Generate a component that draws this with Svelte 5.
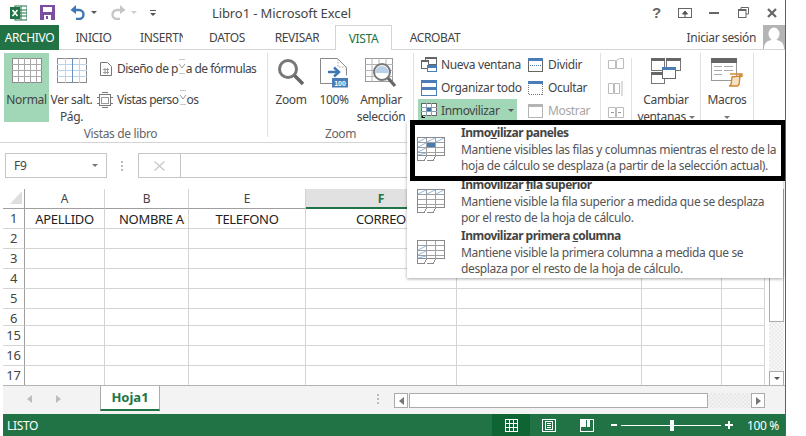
<script>
	const columns = [
		{ name: 'A', width: 80 },
		{ name: 'B', width: 84 },
		{ name: 'E', width: 117 },
		{ name: 'F', width: 151, selected: true },
		{ name: 'G', width: 185 },
		{ name: 'H', width: 80 },
		{ name: 'I', width: 43 }
	]
	// rows 7 to 14 are hidden, row 6 is shown shorter in the sheet
	const rows = [2, 3, 4, 5, 6, 15, 16, 17]
	const gridCols = `22px ${columns.map((c) => c.width + 'px').join(' ')}`
	const gridRows = ['20px', '20px', ...rows.map((r) => (r === 6 ? '17px' : '20px'))].join(' ')
</script>

{#snippet sheetIcon(kind)}
	<svg class="freeze" viewBox="0 0 28 24" width="28" height="24" shape-rendering="crispEdges">
		<rect x="0.5" y="0.5" width="27" height="18" fill="#fff" stroke="#8a8a8a" />
		<path d="M1 5.500h26M1 10.500h26M1 15.500h26M9.500 1v18M18.500 1v18" stroke="#a0a0a0" fill="none" />
		<g shape-rendering="auto" stroke="#8db8de" fill="none">
			{#if kind !== 'col'}
				<path d="M1 5l8-4M10 5l8-4M19 5l8-4" />
			{/if}
			{#if kind !== 'row'}
				<path d="M1 10l8-4M1 15l8-4M1 18l8-2" />
			{/if}
		</g>
		<path d="M0.500 19v4h7l2-4M9.500 23h7l2-4" stroke="#8a8a8a" fill="none" />
		{#if kind === 'panes'}
			<rect x="10" y="6" width="8" height="4" fill="#4a7ab0" />
		{/if}
	</svg>
{/snippet}

{#snippet glitch()}
	<span class="glitch">
		<svg viewBox="0 0 8 15" width="8" height="15">
			<path d="M1 .5h6M1 14.500h6" stroke="#c8c8c8" fill="none" />
			<path d="M1 5l3 4 3-4" stroke="#9a9a9a" fill="none" />
		</svg>
	</span>
{/snippet}

<div class="window">
	<header class="titlebar">
		<div class="quick">
			<svg viewBox="0 0 17 16" width="17" height="16">
				<rect x="5" y="1" width="12" height="14" fill="#fff" stroke="#217346" />
				<path d="M11 1v14M5 5h12M5 8h12M5 11h12" stroke="#217346" />
				<rect x="0" y="2" width="10" height="12" fill="#217346" />
				<path d="M2.500 5l5 6M7.500 5l-5 6" stroke="#fff" stroke-width="1.600" />
			</svg>
			<svg class="save" viewBox="0 0 15 15" width="15" height="15">
				<rect width="15" height="15" fill="#7d4e9e" />
				<rect x="3" y="2" width="9" height="5" fill="#fff" />
				<rect x="4" y="10" width="7" height="5" fill="#fff" />
				<rect x="6" y="11" width="2" height="3" fill="#7d4e9e" />
			</svg>
			<svg class="undo" viewBox="0 0 16 15" width="16" height="15">
				<path d="M3 5h6a4.500 4.500 0 0 1 0 9H6" fill="none" stroke="#3d77b6" stroke-width="2.400" />
				<path d="M6 0v9L0.500 5z" fill="#3d77b6" />
			</svg>
			<i class="caret dark undo-caret"></i>
			<svg class="redo" viewBox="0 0 16 15" width="16" height="15">
				<path d="M13 5H7a4.500 4.500 0 0 0 0 9h3" fill="none" stroke="#c6c6c6" stroke-width="2.400" />
				<path d="M10 0v9l5.500-4z" fill="#c6c6c6" />
			</svg>
			<i class="caret redo-caret"></i>
			<span class="customize"><b></b><i class="caret dark"></i></span>
		</div>
		<div class="title">Libro1 - Microsoft Excel</div>
		<div class="controls">
			<span class="help">?</span>
			<svg viewBox="0 0 14 10" width="14" height="10" class="ctl-ribbon">
				<rect x=".5" y=".5" width="13" height="9" fill="none" stroke="#666" />
				<path d="M7 9V4M4.500 6L7 3l2.500 3z" stroke="#555" fill="#555" />
			</svg>
			<svg viewBox="0 0 10 2" width="10" height="2" class="ctl-min"><rect width="10" height="2" fill="#666" /></svg>
			<svg viewBox="0 0 11 11" width="11" height="11" class="ctl-max">
				<path d="M3 2.500V.5h7.500V7H8" fill="none" stroke="#666" />
				<rect x=".5" y="2.500" width="7.500" height="8" fill="none" stroke="#666" />
				<path d="M0 3h8" stroke="#666" stroke-width="2" />
			</svg>
			<svg viewBox="0 0 10 10" width="10" height="10" class="ctl-close">
				<path d="M1 1l8 8M9 1l-8 8" stroke="#666" stroke-width="2.200" />
			</svg>
		</div>
	</header>

	<nav class="tabs">
		<span class="tab file">ARCHIVO</span>
		<span class="tab w-inicio">INICIO</span>
		<span class="tab w-insert">INSERTN</span>
		<span class="tab w-datos">DATOS</span>
		<span class="tab w-revisar">REVISAR</span>
		<span class="tab active">VISTA</span>
		<span class="tab w-acrobat">ACROBAT</span>
		<span class="signin">Iniciar sesión</span>
		<svg class="avatar" viewBox="0 0 22 24" width="22" height="24">
			<rect width="22" height="24" fill="#b4b4b4" />
			<ellipse cx="11" cy="9" rx="5.500" ry="6.500" fill="#fff" />
			<path d="M1 24c0-7 4-8 7-9h6c3 1 7 2 7 9z" fill="#fff" />
		</svg>
	</nav>

	<section class="ribbon">
		<div class="group g-views">
			<div class="body">
				<div class="big on w45">
					<svg viewBox="0 0 30 25" width="30" height="25" shape-rendering="crispEdges">
						<rect x=".5" y=".5" width="29" height="24" fill="#fff" stroke="#8a8a8a" />
						<path d="M0 6.500h30M0 12.500h30M0 18.500h30M6.500 0v25M12.500 0v25M18.500 0v25M24.500 0v25" stroke="#a8a8a8" />
					</svg>
					<span>Normal</span>
				</div>
				<div class="big w45">
					<svg viewBox="0 0 30 25" width="30" height="25" shape-rendering="crispEdges">
						<rect x=".5" y=".5" width="29" height="24" fill="#fff" stroke="#8a8a8a" />
						<path d="M0 6.500h30M0 12.500h30M0 18.500h30M8.500 0v25M22.500 0v25" stroke="#bcd3ea" />
						<path d="M15.500 0v25" stroke="#6a8fb8" />
					</svg>
					<span>Ver salt.<br />Pág.</span>
				</div>
				<div class="stack views-stack">
					<div class="small">
						<svg viewBox="0 0 12 14" width="14" height="14">
							<path d="M.5.5h7l4 4v9H.5z" fill="#fff" stroke="#777" />
							<path d="M3 7.500h6M3 10.500h6M5 6v6M7.500 6v6" stroke="#999" />
						</svg>
						<span>Diseño de p{@render glitch()}a de fórmulas</span>
					</div>
					<div class="small">
						<svg viewBox="0 0 16 16" width="16" height="16" class="customs">
							<rect x="2.500" y="2.500" width="11" height="11" fill="#fff" stroke="#777" />
							<rect x="4.500" y="5.500" width="7" height="6" fill="none" stroke="#999" />
							<path d="M0 5.500h3M0 11.500h3M13 5.500h3M13 11.500h3M5 .5h6M5 15.500h6" stroke="#777" />
						</svg>
						<span>Vistas perso{@render glitch()}os</span>
					</div>
				</div>
			</div>
			<div class="label views-label">Vistas de libro</div>
		</div>

		<div class="group g-zoom">
			<div class="body">
				<div class="big z1">
					<svg viewBox="0 0 28 28" width="28" height="28">
						<circle cx="11" cy="11" r="8.500" fill="#fff" stroke="#777" stroke-width="3" />
						<path d="M17.500 17.500L26 26" stroke="#666" stroke-width="3.600" />
					</svg>
					<span>Zoom</span>
				</div>
				<div class="big z2">
					<svg viewBox="0 0 28 30" width="28" height="30">
						<path d="M.5.5h17l9 9v8M.5.5v25H12" fill="#fff" stroke="#888" />
						<path d="M18 1v8h9" fill="none" stroke="#aaa" stroke-dasharray="1.500" />
						<path d="M8 14h10M14 9.500l5 4.500-5 4.500" fill="none" stroke="#3e78b4" stroke-width="2.400" />
						<rect x="12" y="20" width="16" height="9.500" fill="#4a7db5" />
						<text x="20" y="28" class="hundred">100</text>
					</svg>
					<span>100%</span>
				</div>
				<div class="big z3">
					<svg viewBox="0 0 32 30" width="32" height="30">
						<rect x=".5" y=".5" width="27" height="23" fill="#fff" stroke="#999" />
						<path d="M0 6.500h28M0 12.500h28M0 18.500h28M7 0v24M14 0v24M21 0v24" stroke="#b4b4b4" />
						<circle cx="17" cy="14" r="8" fill="#fff" stroke="#777" stroke-width="2" />
						<path d="M10 15a7 7 0 0 1 14 0z" fill="#b9d0e6" />
						<path d="M23 20l7 8" stroke="#666" stroke-width="3.200" />
					</svg>
					<span>Ampliar<br />selección</span>
				</div>
			</div>
			<div class="label">Zoom</div>
		</div>

		<div class="group g-window">
			<div class="rows">
				<div class="stack col-a">
					<div class="small ind">
						<svg viewBox="0 0 16 15" width="16" height="15" shape-rendering="crispEdges">
							<rect x="4.500" y=".5" width="11" height="7" fill="#fff" stroke="#666" />
							<rect x="4" y="0" width="12" height="2" fill="#666" />
							<rect x=".5" y="3.500" width="7" height="8" fill="#fff" stroke="#666" />
							<rect x="0" y="3" width="8" height="2" fill="#666" />
							<rect x="6" y="8" width="10" height="7" fill="#4a7db5" />
							<rect x="7" y="11" width="8" height="3" fill="#fff" />
						</svg>
						<span>Nueva ventana</span>
					</div>
					<div class="small ind">
						<svg viewBox="0 0 16 16" width="16" height="16" shape-rendering="crispEdges">
							<rect x=".5" y=".5" width="15" height="15" fill="#fff" stroke="#4a7db5" />
							<rect x="0" y="0" width="16" height="3" fill="#4a7db5" />
							<rect x="0" y="7" width="16" height="3" fill="#4a7db5" />
						</svg>
						<span>Organizar todo</span>
					</div>
					<div class="small freeze-btn ind">
						<svg viewBox="0 0 16 15" width="16" height="15" shape-rendering="crispEdges">
							<rect x=".5" y=".5" width="15" height="12" fill="#fff" stroke="#666" />
							<path d="M0 4.500h16M0 8.500h16M5.500 0v13M10.500 0v13" stroke="#8a9fb5" />
							<rect x="6" y="5" width="4" height="3" fill="#3e6ea8" />
							<path d="M.5 13v2h4M5.500 15h4" stroke="#666" />
						</svg>
						<span>Inmovilizar</span>
						<i class="caret dark"></i>
					</div>
				</div>
				<div class="stack col-b">
					<div class="small">
						<svg viewBox="0 0 15 14" width="15" height="14" shape-rendering="crispEdges">
							<rect x=".5" y=".5" width="14" height="13" fill="#fff" stroke="#666" />
							<rect x="0" y="0" width="15" height="3" fill="#4a7db5" />
							<path d="M2 7.500h11" stroke="#4a7db5" stroke-dasharray="1" />
						</svg>
						<span>Dividir</span>
					</div>
					<div class="small">
						<svg viewBox="0 0 15 14" width="15" height="14" shape-rendering="crispEdges">
							<rect x=".5" y=".5" width="14" height="13" fill="#fff" stroke="#777" stroke-dasharray="1" />
							<rect x="0" y="0" width="15" height="3" fill="#4a7db5" />
						</svg>
						<span>Ocultar</span>
					</div>
					<div class="small disabled">
						<svg viewBox="0 0 15 14" width="15" height="14" shape-rendering="crispEdges">
							<rect x=".5" y=".5" width="14" height="13" fill="#fff" stroke="#b4b4b4" />
							<rect x="0" y="0" width="15" height="3" fill="#b4b4b4" />
						</svg>
						<span>Mostrar</span>
					</div>
				</div>
			</div>
		</div>

		<div class="group g-sync">
			<svg viewBox="0 0 16 11" width="16" height="11">
				<path d="M.5 2.500h7v8h-7zM8.500 2.500l3-2h4v10h-7z" fill="#fff" stroke="#bbb" />
			</svg>
			<svg viewBox="0 0 16 15" width="16" height="15">
				<path d="M.5 2.500h5v10h-5zM6.500 2.500h5v10h-5z" fill="#fff" stroke="#bbb" />
				<path d="M14 0v15" stroke="#bbb" />
			</svg>
			<svg viewBox="0 0 16 11" width="16" height="11">
				<path d="M.5.5h7v10h-7zM8.500.5h7v10h-7z" fill="#fff" stroke="#bbb" />
				<path d="M3 5.500h3M10 5.500h3" stroke="#999" />
			</svg>
		</div>

		<div class="group g-switch">
			<div class="big">
				<svg viewBox="0 0 30 26" width="30" height="26" shape-rendering="crispEdges">
					<rect x=".5" y=".5" width="13" height="12" fill="#fff" stroke="#777" />
					<rect x="0" y="0" width="14" height="3" fill="#666" />
					<rect x="15.500" y=".5" width="14" height="12" fill="#fff" stroke="#777" />
					<rect x="15" y="0" width="15" height="3" fill="#666" />
					<rect x=".5" y="14.500" width="13" height="11" fill="#fff" stroke="#777" />
					<rect x="0" y="14" width="14" height="3" fill="#666" />
					<rect x="11.500" y="9.500" width="13" height="11" fill="#fff" stroke="#666" />
					<rect x="11" y="9" width="14" height="3" fill="#4a7db5" />
				</svg>
				<span>Cambiar<br />ventanas <i class="caret"></i></span>
			</div>
		</div>

		<div class="group g-macros">
			<div class="big">
				<svg viewBox="0 0 32 30" width="32" height="30">
					<rect x=".5" y=".5" width="25" height="22" fill="#fff" stroke="#999" />
					<rect x="0" y="0" width="26" height="5" fill="#666" />
					<path d="M3 8.500h8M13 8.500h9M3 12.500h8M13 12.500h9M3 16.500h8" stroke="#aaa" />
					<path d="M19 16h10v3l2-1v-2h-2M18 28c3 0 2-3 3-9l8-1c-1 6 0 10-3 10z" fill="#f6e3c5" stroke="#d08a35" stroke-width="1.400" />
				</svg>
				<span>Macros<br /><i class="caret"></i></span>
			</div>
		</div>
		<div class="ribbon-rest"></div>
	</section>

	<div class="formula">
		<div class="namebox">F9<i class="caret"></i></div>
		<span class="dots"></span>
		<div class="fx">
			<svg viewBox="0 0 11 10" width="11" height="10"><path d="M.5.5l10 9M10.500.5l-10 9" stroke="#ccc" stroke-width="1.500" /></svg>
		</div>
		<div class="input"></div>
	</div>

	<div class="sheet-area">
		<div class="sheet" style="grid-template-columns: {gridCols}; grid-template-rows: {gridRows}">
			<div class="corner"><i></i></div>
			{#each columns as col}
				<div class="colhead" class:selected={col.selected}>{col.name}</div>
			{/each}

			<div class="rowhead">1</div>
			<div class="cell center">APELLIDO</div>
			<div class="cell clip"><span>NOMBRE APELLIDO</span></div>
			<div class="cell center">TELEFONO</div>
			<div class="cell center">CORREO</div>
			<div class="cell"></div>
			<div class="cell"></div>
			<div class="cell"></div>

			{#each rows as row}
				<div class="rowhead">{row}</div>
				{#each columns as col}
					<div class="cell"></div>
				{/each}
			{/each}
		</div>

		<div class="vscroll">
			<div class="vthumb"></div>
			<div class="vtrack"></div>
			<div class="vbtn"><i class="caret dark"></i></div>
		</div>
	</div>

	<div class="sheetbar">
		<div class="navs">
			<i class="tri left"></i>
			<i class="tri right"></i>
		</div>
		<div class="sheet-tab">Hoja1</div>
		<span class="dots"></span>
		<div class="hscroll">
			<div class="hbtn"><i class="tri left dark"></i></div>
			<div class="hthumb"></div>
			<div class="htrack"></div>
			<div class="hbtn"><i class="tri right dark"></i></div>
		</div>
	</div>

	<footer class="status">
		<span class="ready">LISTO</span>
		<div class="viewmode current">
			<svg viewBox="0 0 13 13" width="13" height="13" shape-rendering="crispEdges">
				<rect x=".5" y=".5" width="12" height="12" fill="none" stroke="#fff" />
				<path d="M4.500 0v13M8.500 0v13M0 4.500h13M0 8.500h13" stroke="#fff" />
			</svg>
		</div>
		<div class="viewmode">
			<svg viewBox="0 0 14 13" width="14" height="13" shape-rendering="crispEdges">
				<rect x=".5" y=".5" width="13" height="12" fill="none" stroke="#fff" />
				<rect x="3.500" y="2.500" width="7" height="8" fill="none" stroke="#fff" />
				<path d="M5 4.500h4M5 6.500h4M5 8.500h4" stroke="#fff" />
			</svg>
		</div>
		<div class="viewmode">
			<svg viewBox="0 0 14 13" width="14" height="13" shape-rendering="crispEdges">
				<rect x=".5" y=".5" width="13" height="12" fill="none" stroke="#fff" />
				<rect x="1" y="1" width="5" height="7" fill="#fff" />
				<rect x="7" y="1" width="3" height="7" fill="#fff" />
			</svg>
		</div>
		<div class="zoomer">
			<b class="minus"></b>
			<div class="slider"><i></i></div>
			<b class="plus"></b>
		</div>
		<span class="pct">100 %</span>
	</footer>

	<div class="popup">
		<div class="item first">
			{@render sheetIcon('panes')}
			<div class="copy">
				<h4>Inmo<u>v</u>ilizar paneles</h4>
				<p>Mantiene visibles las filas y columnas mientras el resto de la hoja de cálculo se desplaza (a partir de la selección actual).</p>
			</div>
		</div>
		<div class="item">
			{@render sheetIcon('row')}
			<div class="copy">
				<h4>Inmovilizar <u>f</u>ila superior</h4>
				<p>Mantiene visible la fila superior a medida que se desplaza por el resto de la hoja de cálculo.</p>
			</div>
		</div>
		<div class="item">
			{@render sheetIcon('col')}
			<div class="copy">
				<h4>Inmovilizar primera <u>c</u>olumna</h4>
				<p>Mantiene visible la primera columna a medida que se desplaza por el resto de la hoja de cálculo.</p>
			</div>
		</div>
	</div>
	<div class="callout"></div>
</div>

<style>
	:global(body) {
		margin: 0;
		background: #fff;
	}

	.window {
		position: relative;
		width: 785px;
		height: 436px;
		overflow: hidden;
		border-right: 1px solid #56626e;
		font-family: 'Noto Sans', 'Open Sans', sans-serif;
		font-size: 12px;
		letter-spacing: -0.35px;
		color: #444;
		background: #fff;
		display: flex;
		flex-direction: column;
	}

	.caret {
		display: inline-block;
		width: 0;
		height: 0;
		border-left: 3px solid transparent;
		border-right: 3px solid transparent;
		border-top: 3px solid #777;
		vertical-align: middle;
	}
	.caret.dark {
		border-top-color: #555;
	}

	.titlebar {
		height: 25px;
		flex: none;
		display: flex;
		align-items: center;
	}
	.quick {
		width: 212px;
		display: flex;
		align-items: center;
		padding-left: 10px;
		box-sizing: border-box;
	}
	.save {
		margin-left: 13px;
	}
	.undo {
		margin-left: 15px;
	}
	.undo-caret {
		margin-left: 5px;
		border-top-color: #666;
	}
	.redo {
		margin-left: 13px;
	}
	.redo-caret {
		margin-left: 5px;
		border-top-color: #ccc;
	}
	.customize {
		margin-left: 13px;
		display: flex;
		flex-direction: column;
		gap: 2px;
		align-items: center;
	}
	.customize b {
		width: 6px;
		height: 1px;
		background: #555;
	}
	.title {
		width: 400px;
		font-size: 13px;
		letter-spacing: -0.1px;
	}
	.controls {
		flex: 1;
		display: flex;
		align-items: center;
		padding-left: 40px;
	}
	.help {
		font: bold 15px 'Liberation Sans', sans-serif;
		color: #666;
		width: 26px;
	}
	.ctl-ribbon {
		margin-right: 17px;
	}
	.ctl-min {
		margin-right: 19px;
	}
	.ctl-max {
		margin-right: 18px;
	}

	.tabs {
		height: 25px;
		flex: none;
		box-sizing: border-box;
		border-bottom: 1px solid #d4d4d4;
		display: flex;
		align-items: stretch;
	}
	.tab {
		display: flex;
		align-items: center;
		justify-content: center;
		overflow: hidden;
		white-space: nowrap;
	}
	.file {
		width: 59px;
		background: #217346;
		color: #fff;
		height: 25px;
	}
	.w-inicio {
		width: 68px;
		padding-left: 1px;
		box-sizing: border-box;
	}
	.w-insert {
		width: 43px;
		margin-left: 13px;
		justify-content: flex-start;
	}
	.w-datos {
		width: 38px;
		margin-left: 25px;
	}
	.w-revisar {
		width: 44px;
		margin-left: 29px;
	}
	.active {
		width: 57px;
		margin-left: 16px;
		box-sizing: border-box;
		border: 1px solid #d4d4d4;
		border-bottom: 0;
		height: 25px;
		background: #fff;
		color: #217346;
	}
	.w-acrobat {
		width: 54px;
		margin-left: 16px;
	}
	.signin {
		margin-left: auto;
		align-self: center;
		margin-right: 7px;
	}
	.avatar {
		flex: none;
	}

	.ribbon {
		height: 93px;
		flex: none;
		box-sizing: border-box;
		border-bottom: 1px solid #d4d4d4;
		padding-top: 3px;
		display: flex;
		align-items: flex-start;
	}
	.group {
		height: 84px;
		box-sizing: border-box;
		border-right: 1px solid #e1e1e1;
		display: flex;
		flex-direction: column;
	}
	.g-views {
		width: 268px;
		padding-left: 4px;
	}
	.g-zoom {
		width: 146px;
	}
	.g-window {
		width: 187px;
	}
	.g-sync {
		width: 31px;
		height: 64px;
		margin-top: 5px;
		padding-bottom: 4px;
		align-items: center;
		justify-content: space-between;
	}
	.g-switch {
		width: 69px;
	}
	.g-macros {
		width: 53px;
	}
	.body {
		flex: 1;
		display: flex;
	}
	.label {
		text-align: center;
		color: #666;
		line-height: 16px;
		margin-bottom: -5px;
	}
	.views-label {
		padding-right: 30px;
	}

	.big {
		display: grid;
		grid-template-rows: 33px auto;
		justify-items: center;
		align-items: start;
		text-align: center;
		line-height: 17px;
		padding-top: 5px;
		height: 69px;
		box-sizing: border-box;
		flex: none;
	}
	.w45 {
		width: 45px;
	}
	.big.on {
		background: #a1d6b6;
	}
	.big.z1 {
		width: 46px;
	}
	.big.z2 {
		width: 40px;
	}
	.big.z3 {
		width: 54px;
	}
	.hundred {
		font: bold 7px 'Liberation Sans', sans-serif;
		fill: #fff;
		text-anchor: middle;
		letter-spacing: 0;
	}

	.stack {
		display: flex;
		flex-direction: column;
	}
	.views-stack {
		margin-left: 5px;
		padding-top: 4px;
		gap: 8px;
		letter-spacing: -0.55px;
	}
	.small {
		display: flex;
		align-items: center;
		gap: 4px;
		height: 23px;
		white-space: nowrap;
	}
	.small svg {
		flex: none;
	}
	.customs {
		margin-left: -2px;
	}
	.glitch {
		display: inline-block;
		width: 8px;
		height: 10px;
		position: relative;
	}
	.glitch svg {
		position: absolute;
		top: -4px;
		left: 0;
	}
	.rows {
		display: flex;
		gap: 11px;
		padding-left: 4px;
	}
	.col-a {
		width: 99px;
	}
	.ind {
		padding-left: 3px;
	}
	.freeze-btn {
		background: #a1d6b6;
		height: 22px;
	}
	.freeze-btn .caret {
		margin-left: 4px;
	}
	.col-b .small {
		gap: 5px;
	}
	.disabled {
		color: #a6a6a6;
	}

	.formula {
		height: 46px;
		flex: none;
		box-sizing: border-box;
		padding: 10px 20px 11px 5px;
		display: flex;
		align-items: stretch;
	}
	.namebox {
		width: 102px;
		box-sizing: border-box;
		border: 1px solid #c6c6c6;
		padding: 0 8px;
		display: flex;
		align-items: center;
		justify-content: space-between;
		color: #444;
	}
	.dots {
		width: 2px;
		height: 10px;
		margin: auto 14px;
		background: repeating-linear-gradient(#bbb 0 2px, transparent 2px 4px);
		flex: none;
	}
	.fx {
		width: 42px;
		margin-left: 1px;
		box-sizing: border-box;
		border: 1px solid #c6c6c6;
		border-right: 0;
		display: flex;
		align-items: center;
		justify-content: center;
	}
	.input {
		flex: 1;
		border: 1px solid #c6c6c6;
	}

	.sheet-area {
		height: 197px;
		flex: none;
		padding-left: 3px;
		display: flex;
		letter-spacing: -0.3px;
	}
	.sheet {
		display: grid;
		align-self: flex-start;
	}
	.corner {
		box-sizing: border-box;
		border-right: 1px solid #9f9f9f;
		border-bottom: 1px solid #9f9f9f;
		padding: 2px 0 0 7px;
	}
	.corner i {
		display: block;
		width: 0;
		height: 0;
		border-left: 12px solid transparent;
		border-bottom: 13px solid #dedede;
	}
	.colhead {
		box-sizing: border-box;
		border-right: 1px solid #d4d4d4;
		border-bottom: 1px solid #9f9f9f;
		text-align: center;
		line-height: 19px;
	}
	.colhead.selected {
		background: #e1e1e1;
		border-bottom: 2px solid #217346;
		color: #217346;
		font-weight: 700;
	}
	.rowhead {
		box-sizing: border-box;
		border-right: 1px solid #9f9f9f;
		border-bottom: 1px solid #d4d4d4;
		text-align: center;
		line-height: 19px;
		font-size: 13px;
		overflow: hidden;
	}
	.cell {
		box-sizing: border-box;
		border-right: 1px solid #d4d4d4;
		border-bottom: 1px solid #d4d4d4;
		line-height: 20px;
		font-size: 13px;
		color: #222;
		white-space: nowrap;
		overflow: hidden;
	}
	.center {
		text-align: center;
	}
	.clip {
		padding-left: 14px;
	}
	.clip span {
		display: block;
		width: 66px;
		overflow: hidden;
	}

	.vscroll {
		width: 15px;
		margin: 0 0 0 4px;
		height: 197px;
		box-sizing: border-box;
		display: flex;
		flex-direction: column;
	}
	.vthumb {
		height: 133px;
		box-sizing: border-box;
		border: 1px solid #ababab;
		border-top: 0;
		background: #fff;
	}
	.vtrack {
		flex: 1;
		background: repeating-conic-gradient(#ececec 0 25%, #f6f6f6 0 50%) 0 0 / 4px 4px;
	}
	.vbtn {
		height: 15px;
		box-sizing: border-box;
		border: 1px solid #ababab;
		display: flex;
		align-items: center;
		justify-content: center;
	}

	.sheetbar {
		height: 28px;
		flex: none;
		margin-left: 3px;
		background: #f3f3f3;
		box-shadow: 0 -1px 0 #b4b4b4;
		display: flex;
		align-items: flex-start;
	}
	.navs {
		width: 97px;
		height: 25px;
		box-sizing: border-box;
		padding-left: 24px;
		display: flex;
		align-items: center;
		gap: 24px;
	}
	.tri {
		display: block;
		width: 0;
		height: 0;
		border-top: 4px solid transparent;
		border-bottom: 4px solid transparent;
	}
	.tri.left {
		border-right: 5px solid #bdbdbd;
	}
	.tri.right {
		border-left: 5px solid #bdbdbd;
	}
	.tri.dark.left {
		border-right-color: #777;
	}
	.tri.dark.right {
		border-left-color: #777;
	}
	.sheet-tab {
		width: 60px;
		height: 25px;
		box-sizing: border-box;
		border: 1px solid #ababab;
		border-top: 0;
		border-bottom: 2px solid #217346;
		background: #fff;
		color: #217346;
		font-weight: 700;
		text-align: center;
		line-height: 22px;
		font-size: 13px;
		letter-spacing: 0;
	}
	.sheetbar .dots {
		margin: 8px 15px 0 217px;
		height: 10px;
	}
	.hscroll {
		display: flex;
		height: 15px;
		margin-top: 7px;
		width: 371px;
	}
	.hbtn {
		width: 14px;
		box-sizing: border-box;
		border: 1px solid #ababab;
		background: #fff;
		display: flex;
		align-items: center;
		justify-content: center;
		flex: none;
	}
	.hthumb {
		width: 299px;
		box-sizing: border-box;
		border: 1px solid #ababab;
		background: #fff;
		margin-left: 1px;
	}
	.htrack {
		flex: 1;
		background: repeating-conic-gradient(#e8e8e8 0 25%, #f3f3f3 0 50%) 0 0 / 4px 4px;
	}

	.status {
		height: 22px;
		flex: none;
		margin-left: 3px;
		background: #217346;
		color: #fff;
		display: flex;
		align-items: center;
	}
	.ready {
		width: 489px;
		padding-left: 4px;
		box-sizing: border-box;
	}
	.viewmode {
		width: 38px;
		height: 22px;
		display: flex;
		align-items: center;
		justify-content: center;
		flex: none;
	}
	.viewmode.current {
		background: #0f6434;
	}
	.zoomer {
		margin-left: 5px;
		display: flex;
		align-items: center;
	}
	.minus {
		width: 6px;
		height: 2px;
		background: #fff;
	}
	.slider {
		position: relative;
		width: 100px;
		height: 1px;
		margin: 0 4px;
		background: #fff;
	}
	.slider i {
		position: absolute;
		left: 49px;
		top: -5px;
		width: 4px;
		height: 11px;
		background: #fff;
	}
	.plus {
		position: relative;
		width: 8px;
		height: 2px;
		background: #fff;
	}
	.plus::after {
		content: '';
		position: absolute;
		left: 3px;
		top: -3px;
		width: 2px;
		height: 8px;
		background: #fff;
	}
	.pct {
		margin-left: 14px;
		white-space: nowrap;
	}

	.popup {
		position: absolute;
		left: 407px;
		top: 122px;
		width: 376px;
		height: 156px;
		box-sizing: border-box;
		padding-top: 3px;
		background: #fff;
		box-shadow: 0 1px 3px rgba(0, 0, 0, 0.35);
	}
	.item {
		height: 51px;
		display: flex;
		padding-left: 10px;
	}
	.item.first {
		height: 52px;
	}
	.freeze {
		flex: none;
		margin-top: 12px;
	}
	.copy {
		margin-left: 16px;
		width: 322px;
		line-height: 16px;
	}
	.copy h4 {
		margin: 0;
		font-size: 12px;
		font-weight: 700;
		color: #444;
		letter-spacing: -0.5px;
	}
	.copy p {
		margin: 1px 0 0;
		color: #555;
		letter-spacing: -0.36px;
	}
	.callout {
		position: absolute;
		left: 410px;
		top: 120px;
		width: 376px;
		height: 61px;
		box-sizing: border-box;
		border: 5px solid #000;
	}
</style>
